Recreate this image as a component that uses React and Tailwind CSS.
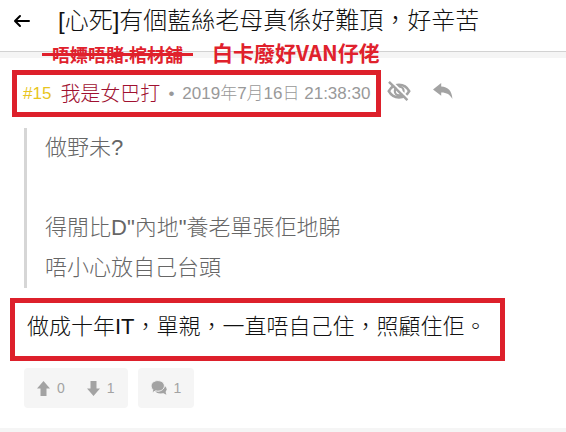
import React from "react";

const quoteLines = ["做野未?", "", "得閒比D\"內地\"養老單張佢地睇", "唔小心放自己台頭"];

function BackIcon() {
  return (
    <svg className="w-5 h-5" viewBox="0 0 20 20" fill="none" stroke="currentColor" strokeWidth="2" strokeLinecap="round" strokeLinejoin="round" aria-hidden="true">
      <path d="M17 10H3.4M8 5l-5 5 5 5" />
    </svg>
  );
}

function EyeOffIcon() {
  return (
    <svg className="w-6 h-5" viewBox="0 0 24 20" fill="none" stroke="currentColor" aria-hidden="true">
      <path strokeWidth="2.6" d="M1.8 10.2C4 6 7.600 3.800 12 3.800s8 2.200 10.200 6.400C20 14.200 16.400 16.400 12 16.400S4 14.200 1.800 10.200z" />
      <circle cx="12.200" cy="10" r="4.400" strokeWidth="2.200" />
      <path stroke="#fff" strokeWidth="2" d="M4.200 0L22 18" />
      <path strokeWidth="2.400" d="M2 .8L20.400 19.200" />
    </svg>
  );
}

function ReplyIcon() {
  return (
    <svg className="w-5 h-4" viewBox="0 0 20 16" fill="currentColor" aria-hidden="true">
      <path d="M0 6.400L8.200 0v3.600C15 3.900 19 8 19.400 16 17 11.400 13.800 9.500 8.200 9.400v3.400z" />
    </svg>
  );
}

function CommentsIcon() {
  return (
    <svg className="w-4 h-4" viewBox="0 0 16 16" fill="currentColor" aria-hidden="true">
      <ellipse cx="9.600" cy="9.200" rx="6" ry="4.400" />
      <path d="M11 12.500l4.400 2.200-1.200-4.200z" />
      <path stroke="#f5f5f5" strokeWidth="1" d="M6.800.6C10.400.6 13.400 2.900 13.400 5.900s-3 5.300-6.600 5.300c-.8 0-1.500-.1-2.200-.3L1 13l.8-3.400C.7 8.600.1 7.300.1 5.900.1 2.900 3.100.6 6.800.6z" />
    </svg>
  );
}

function ThickArrow({ className = "" }) {
  return (
    <svg className={`w-[13px] h-[15px] ${className}`} viewBox="0 0 13 15" fill="currentColor" aria-hidden="true">
      <path d="M6.5 0L13 7.500H9.500V15H3.500V7.500H0z" />
    </svg>
  );
}

function Header() {
  return (
    <header className="relative border-b border-[#d2d2d2] bg-white">
      <div className="flex items-center h-[51px] pt-[3px] px-3 pb-[12px]">
        <button type="button" aria-label="返回" className="w-5 mr-[26px] text-black">
          <BackIcon />
        </button>
        <h1 className="text-[24px] leading-[36px] font-light text-[#111] whitespace-nowrap">[心死]有個藍絲老母真係好難頂，好辛苦</h1>
      </div>
      {/* Handwritten notes over the divider */}
      <div className="absolute left-[42px] top-[38px] z-10 flex items-start whitespace-nowrap font-bold text-[#e0212c]">
        <span className="relative px-[10px] text-[18px] leading-[36px]">
          唔嫖唔賭.棺材舖
          <span className="absolute left-0 right-0 top-[15px] h-[3px] bg-[#e0212c]" />
        </span>
        <span className="ml-[19px] text-[21px] leading-[28px] font-['Noto_Sans_CJK_TC',sans-serif]">白卡廢好VAN仔佬</span>
      </div>
    </header>
  );
}

function PostHeader() {
  return (
    <div className="flex items-center pl-3">
      <div className="flex items-center h-[47px] border-[5px] border-[#dd202b] px-[6px] text-[17px] text-[#999] whitespace-nowrap">
        <span className="text-[#e8c520]">#15</span>
        <a href="#user" className="ml-[9px] text-[20px] font-light text-[#a01030]">我是女巴打</a>
        <span className="mx-[8px]">•</span>
        <time dateTime="2019-07-16T21:38:30" className="font-light">2019年7月16日 21:38:30</time>
      </div>
      <button type="button" aria-label="隱藏" className="ml-[6px] mb-[5px] text-[#a3a3a3]">
        <EyeOffIcon />
      </button>
      <button type="button" aria-label="回覆" className="ml-[22px] mb-[5px] text-[#a3a3a3]">
        <ReplyIcon />
      </button>
    </div>
  );
}

export default function App() {
  return (
    <div className="min-h-screen bg-[#f5f5f5] font-['Liberation_Sans','Noto_Sans_CJK_TC',sans-serif]">
      <Header />
      <article className="mt-[6px] bg-white pt-[12px] pb-[20px]">
        <PostHeader />
        <blockquote className="mt-[11px] ml-6 border-l-[3px] border-[#d6d6d6] pl-[18px] text-[22px] leading-[40px] font-light text-[#666]">
          {quoteLines.map((line, i) => (
            <p key={i} className="min-h-[40px]">{line}</p>
          ))}
        </blockquote>
        <div className="mt-[10px] ml-[10px] mr-3 w-fit border-[5px] border-[#dd202b] pt-[4px] pb-[9px] pl-3 pr-[13px]">
          <p className="text-[22px] leading-[40px] font-light text-[#111]">做成十年IT，單親，一直唔自己住，照顧住佢。</p>
        </div>
        <div className="mt-[7px] ml-6 flex gap-[10px] text-[14px] text-[#a3a3a3]">
          <div className="flex h-10 items-center rounded bg-[#f5f5f5] px-[13px]">
            <button type="button" aria-label="正評" className="flex items-center gap-[7px]">
              <ThickArrow />
              <span>0</span>
            </button>
            <button type="button" aria-label="負評" className="ml-[22px] flex items-center gap-[7px]">
              <ThickArrow className="rotate-180" />
              <span>1</span>
            </button>
          </div>
          <button type="button" aria-label="留言" className="flex h-10 items-center gap-[7px] rounded bg-[#f5f5f5] px-[13px]">
            <CommentsIcon />
            <span>1</span>
          </button>
        </div>
      </article>
    </div>
  );
}
